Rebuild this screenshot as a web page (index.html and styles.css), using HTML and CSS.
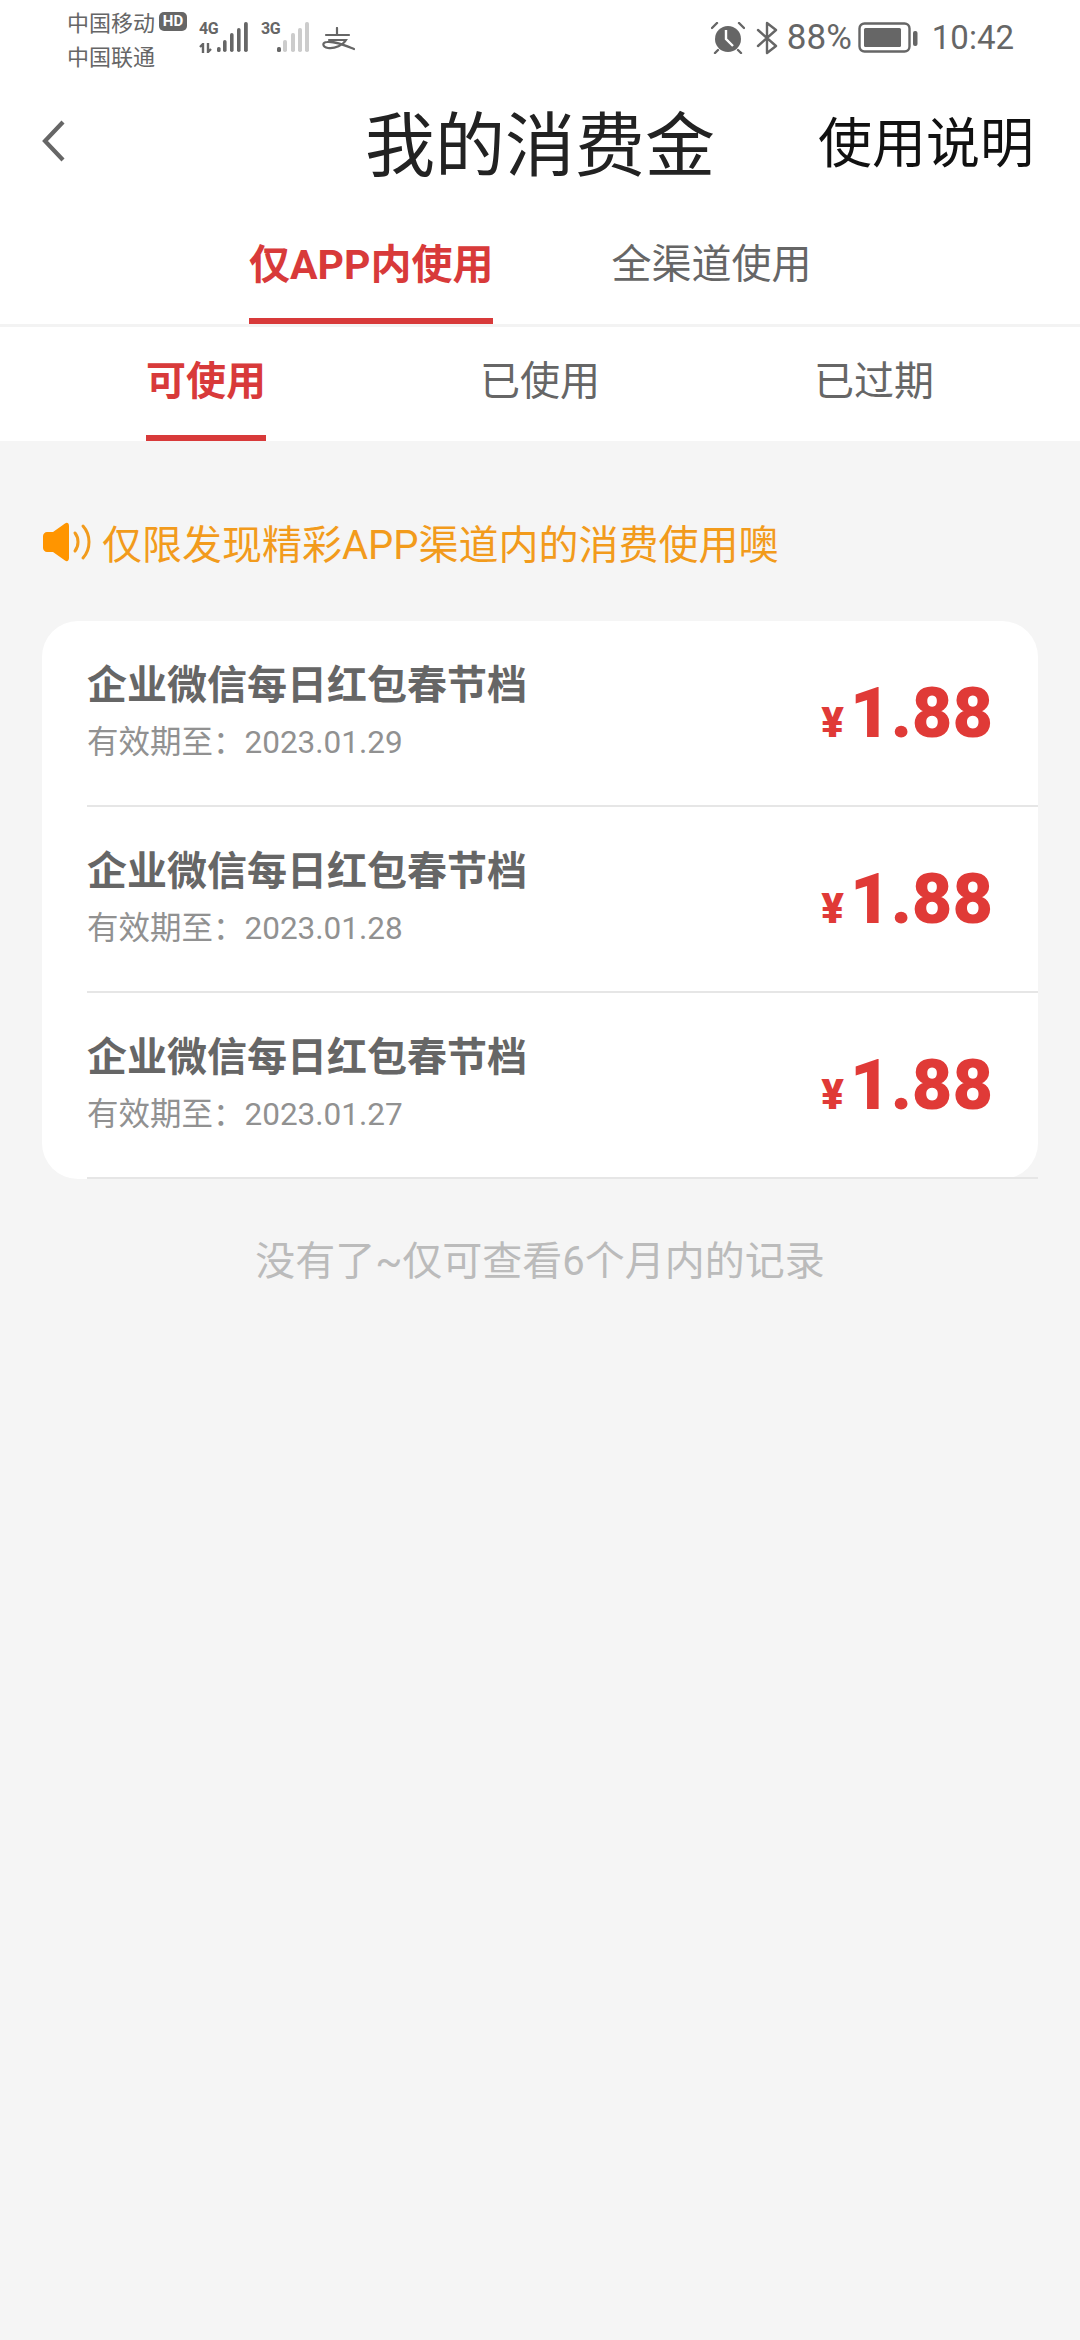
FILE: index.html
```html
<!DOCTYPE html>
<html lang="zh-CN">
  <head>
    <meta charset="UTF-8" />
    <meta name="viewport" content="width=device-width, initial-scale=1.0" />
    <title>我的消费金</title>
    <link rel="stylesheet" href="styles.css">
  </head>
  <body>
    <div class="status-bar">
      <div class="status-left">
        <div class="carriers">
          <div class="carrier">中国移动<span class="hd">HD</span></div>
          <div class="carrier">中国联通</div>
        </div>
        <div class="signal">
          <div class="net">4G</div>
          <svg class="arrows" width="18" height="10" viewBox="0 0 18 10" fill="none" stroke="#666" stroke-width="2.4">
            <path d="M1 4L4 1V10M9 0V9L12 6" />
          </svg>
          <svg class="bars" width="31" height="31" viewBox="0 0 31 31" fill="#666">
            <rect x="0" y="25" width="3.6" height="5" rx="1.6" />
            <rect x="6" y="18" width="3.6" height="12" rx="1.8" />
            <rect x="13" y="11" width="3.6" height="19" rx="1.8" />
            <rect x="20" y="6" width="3.6" height="24" rx="1.8" />
            <rect x="27" y="0" width="3.8" height="30" rx="1.8" />
          </svg>
        </div>
        <div class="signal second">
          <div class="net">3G</div>
          <svg class="bars" width="32" height="31" viewBox="0 0 32 31" fill="#ccc">
            <rect x="0" y="25" width="4" height="5" rx="1.6" fill="#666" />
            <rect x="6" y="18" width="4" height="12" rx="1.8" />
            <rect x="14" y="11" width="4" height="19" rx="1.8" />
            <rect x="21" y="6" width="4" height="24" rx="1.8" />
            <rect x="28" y="0" width="4" height="30" rx="1.8" />
          </svg>
        </div>
        <svg class="alipay" width="33" height="24" viewBox="0 0 33 24" fill="none" stroke="#666" stroke-width="2.2" stroke-linecap="round">
          <path d="M4 8H27M15 1V8M7 13H24C21 18 13 22 6 21C0 20 0 15 5 15C13 14 22 18 32 22" />
        </svg>
      </div>
      <div class="status-right">
        <svg width="34" height="32" viewBox="0 0 34 32">
          <circle cx="17" cy="17" r="13" fill="#666" />
          <path d="M15 8V17L22 24" fill="none" stroke="#fff" stroke-width="2.4" />
          <path d="M1 6L6 1M33 6L28 1M7 28L4 31M27 28L30 31" stroke="#666" stroke-width="2.4" stroke-linecap="round" />
        </svg>
        <svg class="bluetooth" width="22" height="34" viewBox="0 0 22 34" fill="none" stroke="#666" stroke-width="2.4" stroke-linejoin="round" stroke-linecap="round">
          <path d="M2 9L20 25L11 32V2L20 9L2 25" />
        </svg>
        <span class="pct">88%</span>
        <svg class="battery" width="60" height="32" viewBox="0 0 60 32">
          <rect x="1.5" y="1.5" width="50" height="28" rx="5" fill="none" stroke="#666" stroke-width="2.4" />
          <rect x="6" y="6" width="37" height="19" rx="1.5" fill="#666" />
          <rect x="55" y="9" width="4.5" height="15" rx="2" fill="#666" />
        </svg>
        <span class="clock">10:42</span>
      </div>
    </div>

    <div class="nav-bar">
      <svg class="back" width="26" height="44" viewBox="0 0 26 44" fill="none" stroke="#666" stroke-width="4.2">
        <path d="M23 3L5 22L23 41" />
      </svg>
      <h1 class="nav-title">我的消费金</h1>
      <div class="nav-action">使用说明</div>
    </div>

    <div class="channel-tabs">
      <div class="channel-tab active">仅APP内使用</div>
      <div class="channel-tab">全渠道使用</div>
    </div>

    <div class="status-tabs">
      <div class="status-tab active"><span>可使用</span></div>
      <div class="status-tab"><span>已使用</span></div>
      <div class="status-tab"><span>已过期</span></div>
    </div>

    <div class="content">
      <div class="notice">
        <svg width="50" height="40" viewBox="0 0 50 40">
          <path d="M5 10H11L23 1.500C25 0 27 1 27 4V36C27 39 25 40 23 38.500L11 30H5C3 30 1 28 1 26V14C1 12 3 10 5 10Z" fill="#ff9500" />
          <path d="M33 11C37 16 37 24 33 29M41 4C49 13 49 27 41 36" fill="none" stroke="#f29b1c" stroke-width="3" stroke-linecap="round" />
        </svg>
        <span>仅限发现精彩APP渠道内的消费使用噢</span>
      </div>

      <div class="card">
        <div class="item">
          <div>
            <div class="item-name">企业微信每日红包春节档</div>
            <div class="item-date">有效期至：2023.01.29</div>
          </div>
          <div class="amount"><span class="yen">¥</span>1.88</div>
        </div>
        <div class="item">
          <div>
            <div class="item-name">企业微信每日红包春节档</div>
            <div class="item-date">有效期至：2023.01.28</div>
          </div>
          <div class="amount"><span class="yen">¥</span>1.88</div>
        </div>
        <div class="item">
          <div>
            <div class="item-name">企业微信每日红包春节档</div>
            <div class="item-date">有效期至：2023.01.27</div>
          </div>
          <div class="amount"><span class="yen">¥</span>1.88</div>
        </div>
      </div>

      <div class="end-note">没有了~仅可查看6个月内的记录</div>
    </div>
  </body>
</html>
```

FILE: styles.css
```css
* {
  margin: 0;
  padding: 0;
  box-sizing: border-box;
  font-family: "Roboto", "Noto Sans CJK SC", sans-serif;
}

body {
  width: 1080px;
  height: 2340px;
  overflow: hidden;
  display: flex;
  flex-direction: column;
  background: #f5f5f5;
}

/* status bar */
.status-bar {
  height: 72px;
  padding: 0 66px 0 67px;
  display: flex;
  justify-content: space-between;
  background: white;
  color: #666;
}

.status-left {
  display: flex;
  align-items: flex-start;
}

.carriers {
  width: 132px;
  padding-top: 4px;
}

.carrier {
  display: flex;
  align-items: center;
  height: 34px;
  font-size: 22px;
}

.hd {
  margin-left: 4px;
  width: 28px;
  height: 19px;
  line-height: 19px;
  text-align: center;
  border-radius: 5px;
  background: #666;
  color: white;
  font-size: 15px;
  font-weight: 700;
}

.signal {
  position: relative;
  display: flex;
  align-items: flex-start;
  margin-top: 22px;
  height: 31px;
  padding-left: 18px;
}

.second {
  margin-left: 13px;
  padding-left: 16px;
}

/* 4G / 3G label and the data arrows sit over the left of the bars */
.net {
  position: absolute;
  left: 0;
  top: 0;
  font-size: 16px;
  font-weight: 700;
  line-height: 14px;
  letter-spacing: -0.5px;
}

.arrows {
  position: absolute;
  left: 0;
  top: 21px;
}

.alipay {
  margin: 27px 0 0 13px;
}

.status-right {
  display: flex;
  align-items: center;
  padding-top: 3px;
}

.bluetooth {
  margin-left: 11px;
}

.pct {
  margin-left: 9px;
  font-size: 35px;
}

.battery {
  margin-left: 6px;
}

.clock {
  margin-left: 14px;
  font-size: 33px;
}

/* nav */
.nav-bar {
  height: 146px;
  position: relative;
  display: flex;
  align-items: center;
  justify-content: center;
  padding-top: 3px;
  background: white;
}

.back {
  position: absolute;
  left: 40px;
  top: 47px;
}

.nav-title {
  font-size: 70px;
  font-weight: 400;
  line-height: 72px;
  color: #222;
}

.nav-action {
  position: absolute;
  right: 46px;
  top: 37px;
  font-size: 54px;
  line-height: 72px;
  color: #111;
}

/* tabs */
.channel-tabs {
  height: 109px;
  padding-left: 249px;
  display: flex;
  gap: 118px;
  background: white;
  border-bottom: 3px solid #f3f3f3;
}

.channel-tab {
  display: flex;
  align-items: center;
  height: 106px;
  padding-bottom: 20px;
  font-size: 40px;
  color: #666;
}

.channel-tab.active {
  padding-bottom: 14px;
  font-size: 41px;
  font-weight: 700;
  color: #d83a3a;
  border-bottom: 6px solid #d83a3a;
}

.status-tabs {
  height: 114px;
  display: grid;
  grid-template-columns: 1fr 1fr 1fr;
  padding: 0 39px;
  background: white;
}

.status-tab {
  display: flex;
  justify-content: center;
  font-size: 40px;
  color: #666;
}

.status-tab span {
  display: flex;
  align-items: center;
  padding-bottom: 13px;
}

.status-tab.active span {
  padding-bottom: 7px;
  font-weight: 700;
  color: #d83a3a;
  border-bottom: 6px solid #d83a3a;
}

/* list */
.content {
  flex: 1;
  padding: 0 42px;
}

.notice {
  height: 180px;
  padding-top: 22px;
  display: flex;
  align-items: center;
  gap: 10px;
  font-size: 40px;
  color: #f29b1c;
}

.card {
  border-radius: 36px;
  background: white;
}

.item {
  height: 186px;
  margin-left: 45px;
  padding-right: 45px;
  display: flex;
  align-items: center;
  justify-content: space-between;
  border-bottom: 2px solid #e6e6e6;
}

.item-name {
  font-size: 40px;
  font-weight: 700;
  line-height: 60px;
  color: #666;
}

.item-date {
  font-size: 31.5px;
  line-height: 54px;
  color: #919191;
}

.amount {
  font-size: 70px;
  font-weight: 900;
  color: #e03a37;
}

.yen {
  margin-right: 6px;
  font-size: 42px;
}

.end-note {
  margin-top: 50px;
  text-align: center;
  font-size: 40px;
  color: #bbb;
}
```
